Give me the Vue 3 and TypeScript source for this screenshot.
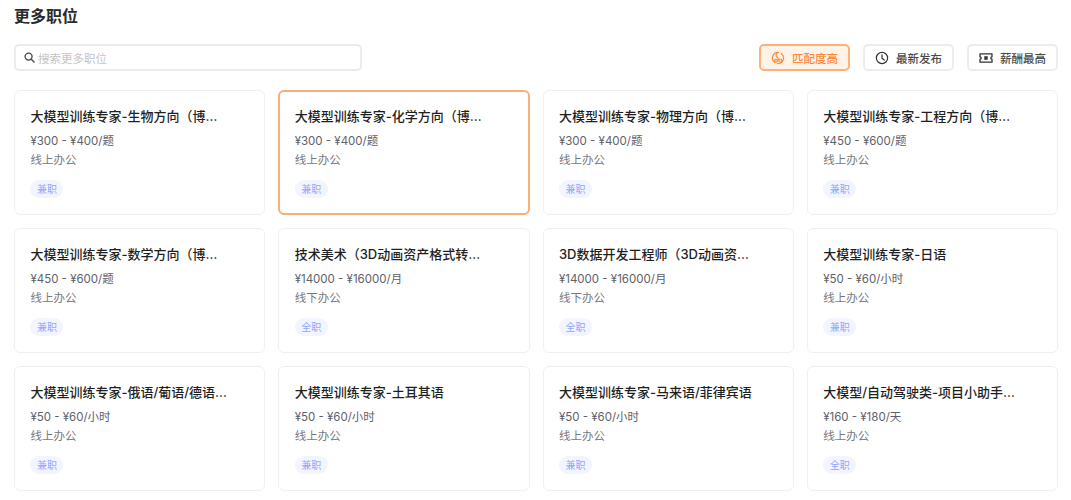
<script setup lang="ts">
interface Job { title: string; salary: string; place: string; tag: string }
const jobs: Job[] = [
  { title: '大模型训练专家-生物方向（博士）', salary: '¥300 - ¥400/题', place: '线上办公', tag: '兼职' },
  { title: '大模型训练专家-化学方向（博士）', salary: '¥300 - ¥400/题', place: '线上办公', tag: '兼职' },
  { title: '大模型训练专家-物理方向（博士）', salary: '¥300 - ¥400/题', place: '线上办公', tag: '兼职' },
  { title: '大模型训练专家-工程方向（博士）', salary: '¥450 - ¥600/题', place: '线上办公', tag: '兼职' },
  { title: '大模型训练专家-数学方向（博士）', salary: '¥450 - ¥600/题', place: '线上办公', tag: '兼职' },
  { title: '技术美术（3D动画资产格式转换方向）', salary: '¥14000 - ¥16000/月', place: '线下办公', tag: '全职' },
  { title: '3D数据开发工程师（3D动画资产方向）', salary: '¥14000 - ¥16000/月', place: '线下办公', tag: '全职' },
  { title: '大模型训练专家-日语', salary: '¥50 - ¥60/小时', place: '线上办公', tag: '兼职' },
  { title: '大模型训练专家-俄语/葡语/德语方向', salary: '¥50 - ¥60/小时', place: '线上办公', tag: '兼职' },
  { title: '大模型训练专家-土耳其语', salary: '¥50 - ¥60/小时', place: '线上办公', tag: '兼职' },
  { title: '大模型训练专家-马来语/菲律宾语', salary: '¥50 - ¥60/小时', place: '线上办公', tag: '兼职' },
  { title: '大模型/自动驾驶类-项目小助手实习生', salary: '¥160 - ¥180/天', place: '线上办公', tag: '全职' },
]
</script>

<template>
  <div class="page">
    <h1 class="heading">更多职位</h1>
    <div class="toolbar">
      <label class="search">
        <svg width="11" height="11" viewBox="0 0 12 12" fill="none" stroke="#4b4b4b" stroke-width="1.5">
          <circle cx="5" cy="5" r="3.8" />
          <path d="M7.900 7.900 11 11" stroke-linecap="round" />
        </svg>
        <span class="placeholder">搜索更多职位</span>
      </label>
      <div class="sorts">
        <button class="sort active">
          <svg width="14" height="14" viewBox="0 0 14 14" fill="none" stroke="#f98a3c" stroke-width="1.2" stroke-linecap="round">
            <path d="M7.500 1.500A5.500 5.500 0 0 0 3.600 11.300" />
            <path d="M6.500 12.500A5.500 5.500 0 0 0 10.400 2.700" />
            <path d="M7.500 1.500C5 1.800 4.300 4.500 6 6C7 6.900 7.500 7.500 7.400 8.500" />
            <circle cx="9.300" cy="9.500" r="1.500" />
            <circle cx="5" cy="9.700" r="1.400" />
          </svg>
          <span>匹配度高</span>
        </button>
        <button class="sort">
          <svg width="14" height="14" viewBox="0 0 14 14" fill="none" stroke="#333" stroke-width="1.200" stroke-linecap="round" stroke-linejoin="round">
            <circle cx="7" cy="7" r="5.600" />
            <path d="M7 3.800V7.200L9.200 9" />
          </svg>
          <span>最新发布</span>
        </button>
        <button class="sort">
          <svg width="14" height="14" viewBox="0 0 14 14" fill="none" stroke="#333" stroke-width="1.300" stroke-linejoin="round">
            <path d="M1 2.800h12v3a1.200 1.200 0 0 0 0 2.400v3H1V8.200a1.200 1.200 0 0 0 0-2.400Z" />
            <path d="M5.300 5.200h3.400v3.600H5.300Z" fill="#333" stroke="none" />
          </svg>
          <span>薪酬最高</span>
        </button>
      </div>
    </div>
    <div class="grid">
      <article v-for="(job, i) in jobs" :key="i" class="card" :class="{ selected: i === 1 }">
        <h2 class="title">{{ job.title }}</h2>
        <p class="salary">{{ job.salary }}</p>
        <p class="place">{{ job.place }}</p>
        <span class="tag">{{ job.tag }}</span>
      </article>
    </div>
  </div>
</template>

<style>
html, body { margin: 0; background: #fff; }
</style>

<style scoped>
.page {
  height: 500px;
  overflow: hidden;
  box-sizing: border-box;
  padding: 5px 13px 0 14px;
  font-family: Inter, "Noto Sans CJK SC", sans-serif;
  color: #222;
}
.heading {
  margin: 0;
  font-size: 16px;
  line-height: 22px;
  font-weight: 600;
  color: #2a2a2a;
}
.toolbar {
  display: flex;
  justify-content: space-between;
  align-items: center;
  margin-top: 17px;
  height: 27px;
}
.search {
  width: 348px;
  height: 27px;
  box-sizing: border-box;
  display: flex;
  align-items: center;
  gap: 3px;
  padding-left: 8px;
  border: 2px solid #eaebed;
  border-radius: 5px;
}
.placeholder { font-size: 11.500px; color: #c4c4c6; }
.sorts { display: flex; gap: 13px; }
.sort {
  display: flex;
  align-items: center;
  justify-content: center;
  gap: 7px;
  width: 91px;
  height: 27px;
  padding: 0;
  box-sizing: border-box;
  background: #fff;
  border: 2px solid #ecedef;
  border-radius: 5px;
  font: inherit;
  font-size: 11.500px;
  font-weight: 500;
  color: #4a4a4a;
}
.sort.active {
  background: #fff2e6;
  border-color: #fcb07c;
  color: #f98a3c;
}
.grid {
  display: grid;
  grid-template-columns: repeat(4, 1fr);
  grid-auto-rows: 125px;
  column-gap: 13px;
  row-gap: 13px;
  margin-top: 19px;
}
.card {
  box-sizing: border-box;
  padding: 15px 15px 0 15.400px;
  border: 1px solid #f0f0f2;
  border-radius: 6px;
  background: #fff;
  min-width: 0;
}
.card.selected {
  padding: 14px 14px 0 14.400px;
  border: 2px solid #fbad78;
}
.title {
  margin: 0;
  width: 197.500px;
  font-size: 13px;
  line-height: 20px;
  font-weight: 500;
  color: #1f1f1f;
  white-space: nowrap;
  overflow: hidden;
  text-overflow: ellipsis;
}
.salary, .place {
  margin: 0;
  font-size: 11.500px;
}
.salary { margin-top: 6px; line-height: 18px; color: #5f6169; }
.place { margin-top: 1px; line-height: 18px; color: #777981; }
.tag {
  display: inline-block;
  margin-top: 11px;
  width: 33px;
  height: 18px;
  line-height: 18px;
  text-align: center;
  font-size: 10px;
  color: #8fa8fb;
  background: #f2f5ff;
  border-radius: 9px;
}
</style>
